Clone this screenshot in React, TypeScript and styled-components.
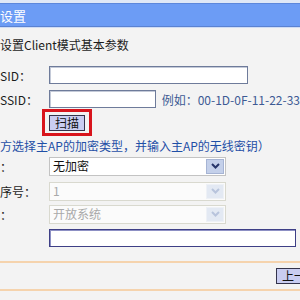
import styled, { createGlobalStyle } from 'styled-components'

const GlobalStyle = createGlobalStyle`
    html, body {
        margin: 0;
        padding: 0;
        background: #f3f3f3;
    }
    body {
        font-family: "Noto Sans CJK SC", "DejaVu Sans", sans-serif;
        font-size: 12px;
        color: #1c1c1c;
    }
`

const Page = styled.div`
    width: 300px;
    height: 300px;
    overflow: hidden;
    display: flex;
    flex-direction: column;
    background: #f3f3f3;
`

const TopStrip = styled.div`
    height: 3px;
    background: #dfe8f7;
`

const Header = styled.div`
    height: 22px;
    display: flex;
    align-items: center;
    background: #6c9cf5;
    border-top: 1px solid #5c87dc;
    border-bottom: 1px solid #5a82d2;
    color: #ffffff;
    font-size: 13px;
    line-height: 1;
`

const HeaderShadow = styled.div`
    height: 1px;
    background: #cfdcf4;
`

const Title = styled.div`
    height: 32px;
    display: flex;
    align-items: center;
`

const Row = styled.div<{ $h: number }>`
    height: ${p => p.$h}px;
    display: flex;
    align-items: center;
`

const Label = styled.div`
    width: 49px;
    flex-shrink: 0;
    white-space: nowrap;
`

const TextInput = styled.div<{ $w: number; $dark?: boolean }>`
    width: ${p => p.$w}px;
    height: 18px;
    box-sizing: border-box;
    background: #ffffff;
    border: 1px solid ${p => (p.$dark ? '#3e3f86' : '#6e7b9a')};
    box-shadow: inset 1px 1px 0 ${p => (p.$dark ? '#8d90c4' : '#c4cad8')};
`

const Hint = styled.span`
    margin-left: 6px;
    color: #3d5a94;
    white-space: nowrap;
`

const ScanFrame = styled.div`
    margin-left: 42px;
    width: 50px;
    height: 27px;
    box-sizing: border-box;
    border: 3px solid #d8141c;
    display: flex;
    align-items: center;
    justify-content: center;
`

const Button = styled.div<{ $trail?: number }>`
    height: 16px;
    padding: 0 ${p => p.$trail ?? 5}px 0 5px;
    box-sizing: border-box;
    display: flex;
    align-items: center;
    flex-shrink: 0;
    background: #c9cdf1;
    border: 1px solid #34344c;
    font-size: 12px;
    line-height: 1;
    color: #111111;
    white-space: nowrap;
`

const Notice = styled.div`
    height: 16px;
    display: flex;
    align-items: center;
    color: #1f4fa6;
    white-space: nowrap;
`

const Select = styled.div<{ $disabled?: boolean }>`
    width: 177px;
    height: 19px;
    box-sizing: border-box;
    display: flex;
    align-items: stretch;
    background: ${p => (p.$disabled ? '#fbfbfb' : '#ffffff')};
    border: 1px solid ${p => (p.$disabled ? '#d9d9cf' : '#c3c3c3')};
    color: ${p => (p.$disabled ? '#a9a9a9' : '#111111')};
`

const SelectText = styled.div`
    flex: 1;
    display: flex;
    align-items: center;
    padding-left: 3px;
    line-height: 1;
`

const Arrow = styled.div<{ $disabled?: boolean }>`
    width: 16px;
    margin: 1px;
    display: flex;
    align-items: center;
    justify-content: center;
    background: ${p => (p.$disabled ? '#e3e9f3' : '#c4d0ea')};
    border: 1px solid ${p => (p.$disabled ? '#eef1f6' : '#a6b4d4')};
`

const Spacer = styled.div`
    flex: 1;
`

const Footer = styled.div`
    height: 26px;
    display: flex;
    align-items: center;
    padding-left: 276px;
    border-top: 2px solid #f5d3ad;
    border-bottom: 2px solid #f5d3ad;
`

const Chevron = ({ disabled }: { disabled?: boolean }) => (
    <svg width='9' height='6' viewBox='0 0 9 6'>
        <path d='M1 1 L4.5 4.5 L8 1' fill='none' stroke={disabled ? '#b8c4dc' : '#27356a'} strokeWidth='2' />
    </svg>
)

const Dropdown = ({ value, disabled }: { value: string; disabled?: boolean }) => (
    <Select $disabled={disabled}>
        <SelectText>{value}</SelectText>
        <Arrow $disabled={disabled}>
            <Chevron disabled={disabled} />
        </Arrow>
    </Select>
)

const App = () => {
    return (
        <>
            <GlobalStyle />
            <Page>
                <TopStrip />
                <Header>设置</Header>
                <HeaderShadow />
                <Title>设置Client模式基本参数</Title>
                <Row $h={30}>
                    <Label>SID：</Label>
                    <TextInput $w={199} />
                </Row>
                <Row $h={18}>
                    <Label>SSID：</Label>
                    <TextInput $w={111} />
                    <Hint>例如：00-1D-0F-11-22-33</Hint>
                </Row>
                <Row $h={29}>
                    <ScanFrame>
                        <Button>扫描</Button>
                    </ScanFrame>
                </Row>
                <Notice>方选择主AP的加密类型，并输入主AP的无线密钥）</Notice>
                <Row $h={26}>
                    <Label>：</Label>
                    <Dropdown value='无加密' />
                </Row>
                <Row $h={24}>
                    <Label>序号：</Label>
                    <Dropdown value='1' disabled />
                </Row>
                <Row $h={22}>
                    <Label>：</Label>
                    <Dropdown value='开放系统' disabled />
                </Row>
                <Row $h={26}>
                    <Label />
                    <TextInput $w={247} $dark />
                </Row>
                <Spacer />
                <Footer>
                    <Button $trail={12}>上一</Button>
                </Footer>
                <Spacer />
            </Page>
        </>
    )
}

export default App
